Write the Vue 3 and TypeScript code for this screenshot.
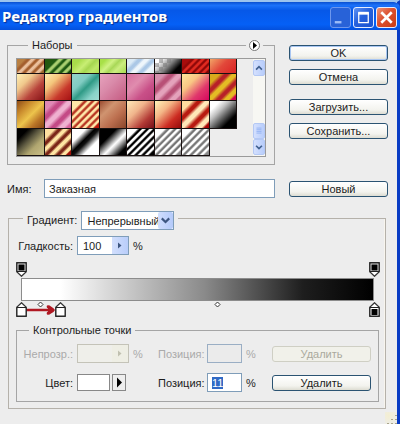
<script setup lang="ts">
import { nextTick, onMounted, ref } from 'vue'

/** Diagonal stripes between two plain corners. */
function stripes(a: string, b: string, step: number, start = a, end = b): string {
  const parts: string[] = [`${start} 0%`, `${start} 18%`]
  for (let p = 20; p + step <= 86; p += step) {
    parts.push(`${b} ${p + step * 0.25}%`, `${b} ${p + step * 0.45}%`)
    parts.push(`${a} ${p + step * 0.7}%`, `${a} ${p + step * 0.95}%`)
  }
  parts.push(`${end} 88%`, `${end} 100%`)
  return `linear-gradient(135deg, ${parts.join(', ')})`
}

function blend(...stops: string[]): string {
  return `linear-gradient(135deg, ${stops.join(', ')})`
}

interface Preset {
  name: string
  paint: string
}

const presets: Preset[] = [
  stripes('#eabf9c', '#a45f2e', 21, '#b98043', '#99662b'),
  stripes('#a9cf70', '#1f5a12', 21, '#22580f', '#174a0c'),
  blend('#a8dc4a 20%', '#c8ee74 42%', '#a6d650 58%', '#bfe86a 75%', '#a8dc4a'),
  blend('#a8e048 15%', '#d0f284 35%', '#a9d858 50%', '#ccee80 65%', '#9fd848'),
  stripes('#eef6fb', '#abc8e6', 32, '#dcebf6', '#e6f2f4'),
  'linear-gradient(135deg, transparent 15%, #777 50%, #000 75%), repeating-conic-gradient(#bbb 0% 25%, #fff 0% 50%) 0 0 / 8px 8px',
  stripes('#e02a20', '#8e0808', 16, '#a80c0c', '#7c0505'),
  blend('#f3a567', '#e2483a 45%', '#d81f22'),
  blend('#fff0b4', '#f0c88c 30%', '#b8443c 62%', '#800d12'),
  blend('#ffeeb0', '#f4c67c 30%', '#c8392c 65%', '#a00c10'),
  blend('#8fd2c8 10%', '#80ccc2 32%', '#2f9a86 50%', '#88d2c8 75%', '#a4ddd4'),
  blend('#e7a2bd', '#d98aa9 40%', '#c3567e'),
  blend('#d76f9f', '#e08cae 35%', '#c95088 65%', '#b83d78'),
  stripes('#e4a2bb', '#b85076', 33, '#d690ac', '#c2688c'),
  blend('#ffe89c', '#f9c684 32%', '#e0386c 65%', '#d4005c'),
  stripes('#e4bb24', '#b82028', 32, '#d9aa1c', '#d10050'),
  blend('#8e4c18', '#c8892c 25%', '#edc44c 50%', '#bb7627 72%', '#7d3d12'),
  stripes('#efb1d0', '#c44a86', 32, '#e089b5', '#d6659c'),
  stripes('#ffe6a8', '#b93824', 13, '#ffe6a8', '#b8180c'),
  blend('#9b4c30', '#d09470 30%', '#bd7050 58%', '#854126'),
  blend('#ffe8b8', '#f0b58c 35%', '#b33b36 68%', '#6c0914'),
  blend('#fff5ba', '#f4b586 33%', '#cc2c22 67%', '#8c0608'),
  stripes('#ffe8b8', '#b81a10', 32, '#ffdca0', '#a80606'),
  blend('#fff 18%', '#c0c0c0 35%', '#000 72%'),
  blend('#000 20%', '#5c5840 42%', '#b0a670 65%', '#cec28a'),
  stripes('#ffe5a4', '#7c2618', 22, '#ffe0a0', '#9f1008'),
  blend('#fff 25%', '#000 42%', '#111 50%', '#fff 68%'),
  blend('#000 30%', '#fff 55%', '#ddd 60%', '#000 82%'),
  stripes('#fff', '#000', 13, '#fff', '#000'),
  stripes('#fff', '#777', 13, '#fff', '#8b8b8b'),
  stripes('#fff', '#777', 13, '#fff', '#8b8b8b'),
].map((paint, i) => ({ name: `${i + 1}`, paint }))

const name = ref('Заказная')
const kind = ref('Непрерывный')
const smoothness = ref('100')
const opacity = ref('')
const opacityPosition = ref('')
const position = ref('11')
const positionInput = ref<HTMLInputElement | null>(null)

const opacityStops = [0, 100]
const colorStops = [
  { at: 0, color: '#fff' },
  { at: 11, color: '#fff' },
  { at: 100, color: '#000' },
]
const midpoints = [5.5, 55.5]

onMounted(async () => {
  await nextTick()
  positionInput.value?.focus()
  positionInput.value?.select()
})
</script>

<template>
  <div class="window">
    <header class="titlebar">
      <h1>Редактор градиентов</h1>
      <div class="controls">
        <button type="button" class="ctl dim" aria-label="Свернуть">
          <svg viewBox="0 0 20 20"><path d="M4 15h7" stroke="#9dbdf8" stroke-width="2.5" /></svg>
        </button>
        <button type="button" class="ctl" aria-label="Развернуть">
          <svg viewBox="0 0 20 20"><path d="M5 5.500h10v10H5z" fill="none" stroke="#fff" stroke-width="1.300" /><path d="M4.400 5.500h11.200" stroke="#fff" stroke-width="3" /></svg>
        </button>
        <button type="button" class="ctl close" aria-label="Закрыть">
          <svg viewBox="0 0 20 20"><path d="M4.500 4.500l11 11M15.500 4.500l-11 11" stroke="#fff" stroke-width="2.800" /></svg>
        </button>
      </div>
    </header>

    <form class="content" @submit.prevent>
      <div class="top">
        <fieldset class="presets">
          <legend>Наборы</legend>
          <button type="button" class="flyout" aria-label="Меню наборов">
            <svg viewBox="0 0 9 9"><path d="M3 1l4 3.500L3 8z" fill="#000" /></svg>
          </button>
          <div class="list">
            <div class="tiles">
              <button
                v-for="p in presets"
                :key="p.name"
                type="button"
                class="tile"
                :aria-label="p.name"
                :style="{ background: p.paint }"
              ></button>
            </div>
            <div class="scroll">
              <button type="button" class="sb" aria-label="Вверх">
                <svg viewBox="0 0 12 16"><path d="M2.500 10L6 6.500 9.500 10" /></svg>
              </button>
              <span class="trough"></span>
              <span class="sb thumb">
                <svg viewBox="0 0 12 16"><path class="ridge" d="M3 4.500h6M3 6.500h6M3 8.500h6M3 10.500h6" /></svg>
              </span>
              <button type="button" class="sb" aria-label="Вниз">
                <svg viewBox="0 0 12 16"><path d="M2.500 6.500L6 10l3.500-3.500" /></svg>
              </button>
            </div>
          </div>
        </fieldset>
        <div class="actions">
          <button type="submit" class="btn default">OK</button>
          <button type="button" class="btn">Отмена</button>
          <button type="button" class="btn second">Загрузить...</button>
          <button type="button" class="btn">Сохранить...</button>
        </div>
      </div>

      <div class="namerow">
        <label for="name">Имя:</label>
        <input id="name" v-model="name" class="field grow" type="text" />
        <button type="button" class="btn">Новый</button>
      </div>

      <fieldset class="gradient">
        <legend class="kind">
          <label for="kind">Градиент:</label>
          <span class="combo">
            <select id="kind" v-model="kind">
              <option>Непрерывный</option>
              <option>Шумовой</option>
            </select>
            <span class="drop">
              <svg viewBox="0 0 14 16"><path d="M3.500 6L7 9.500 10.500 6" /></svg>
            </span>
          </span>
        </legend>

        <div class="row smooth">
          <label class="lead" for="smooth">Гладкость:</label>
          <span class="spin">
            <input id="smooth" v-model="smoothness" type="text" />
            <button type="button" aria-label="Ползунок гладкости">
              <svg viewBox="0 0 16 16"><path d="M6 5l3.500 3L6 11z" /></svg>
            </button>
          </span>
          <span>%</span>
        </div>

        <div class="ramp">
          <button
            v-for="at in opacityStops"
            :key="at"
            type="button"
            class="stop above"
            aria-label="Непрозрачность"
            :style="{ left: at + '%' }"
          >
            <svg viewBox="0 0 11 15"><path d="M.7.700h9.600v9L5.500 14.300.7 9.700z" fill="#fff" stroke="#333" stroke-width="1.200" /><path d="M1 1h9v8.500H1z" fill="#ddd" stroke="#222" /><path d="M2.500 2.500h6v6h-6z" fill="#000" /></svg>
          </button>
          <div class="bar"></div>
          <svg class="hint" viewBox="0 0 30 10"><path d="M0 5h24" stroke="#b01822" stroke-width="2.500" /><path d="M21 .5q2-1 4 1 3 1.500 4 3.500-1 2-4 3.500-2 2-4 1-1-2 1-3V3.500q-2-1-1-3z" fill="#b01822" /></svg>
          <button
            v-for="s in colorStops"
            :key="s.at"
            type="button"
            class="stop below"
            aria-label="Цвет"
            :style="{ left: s.at + '%' }"
          >
            <svg viewBox="0 0 11 15"><path d="M.7 14.300h9.600v-9L5.500.7.7 5.300z" fill="#fff" stroke="#333" stroke-width="1.200" /><path d="M1 5.500h9V14H1z" fill="#fff" stroke="#222" /><path d="M2.500 7h6v6h-6z" :fill="s.color" /></svg>
          </button>
          <span v-for="m in midpoints" :key="m" class="mid" :style="{ left: m + '%' }">
            <svg viewBox="0 0 7 7"><path d="M3.500 1L6 3.500 3.500 6 1 3.500z" fill="#fff" stroke="#333" /></svg>
          </span>
        </div>

        <fieldset class="points">
          <legend>Контрольные точки</legend>
          <div class="row off">
            <label class="lead" for="opacity">Непрозр.:</label>
            <span class="spin">
              <input id="opacity" v-model="opacity" type="text" disabled />
              <button type="button" disabled aria-label="Ползунок непрозрачности">
                <svg viewBox="0 0 16 16"><path d="M6 5l3.500 3L6 11z" /></svg>
              </button>
            </span>
            <span class="pct">%</span>
            <label class="pos" for="opos">Позиция:</label>
            <input id="opos" v-model="opacityPosition" class="field num" type="text" disabled />
            <span>%</span>
            <button type="button" class="btn push" disabled>Удалить</button>
          </div>
          <div class="row">
            <label class="lead" for="color">Цвет:</label>
            <span class="colour">
              <button id="color" type="button" class="well" aria-label="Цвет"></button>
              <button type="button" class="pop" aria-label="Выбор цвета">
                <svg viewBox="0 0 12 15"><path d="M4 2.500l5 5-5 5z" fill="#000" /></svg>
              </button>
            </span>
            <span class="pct"></span>
            <label class="pos" for="pos">Позиция:</label>
            <input id="pos" ref="positionInput" v-model="position" class="field num" type="text" />
            <span>%</span>
            <button type="button" class="btn push">Удалить</button>
          </div>
        </fieldset>
      </fieldset>
    </form>
    <svg class="grip" viewBox="0 0 12 12"><path d="M11 3v1M7 7v1M11 7v1M3 11v1M7 11v1M11 11v1" stroke="#a9a58c" stroke-width="2" /></svg>
  </div>
</template>

<style>
body {
  background: #ededed;
}
</style>

<style scoped>
* {
  box-sizing: border-box;
}
.window {
  position: relative;
  min-height: 100vh;
  background: #ededed;
  border-top: 2px solid #9cc3ee;
  border-right: 3px solid #0a3cc4;
  font: 11px/14px "Liberation Sans", Arial, sans-serif;
  color: #1c1c1c;
}
button,
input,
select {
  font: inherit;
  color: inherit;
  margin: 0;
  padding: 0;
  outline: none;
}
svg {
  display: block;
  width: 100%;
  height: 100%;
}
fieldset {
  margin: 0;
  padding: 0;
  min-width: 0;
  border: 1px solid #a5a5a5;
}
legend {
  padding: 0 4px;
}
.titlebar {
  display: flex;
  align-items: center;
  justify-content: space-between;
  height: 28px;
  margin-right: -3px;
  padding: 0 3px 0 2px;
  border-top-right-radius: 6px;
  background: linear-gradient(#0a4fd0, #1c72fa 12%, #0658e8 30%, #0560f6 80%, #0450dc);
}
h1 {
  margin: 0;
  font: bold 15px/24px "Noto Sans", "Open Sans", sans-serif;
  color: #fff;
  text-shadow: 1px 1px 1px #0a2f90;
  white-space: nowrap;
}
.controls {
  display: flex;
  gap: 2px;
  padding-top: 2px;
}
.ctl {
  width: 21px;
  height: 21px;
  border: 1px solid #e4ecff;
  border-radius: 3px;
  background: linear-gradient(135deg, #5f93f4, #2560dc 45%, #1a52cf);
}
.ctl.dim {
  border-color: #6d97ee;
  background: #2862d8;
}
.ctl.close {
  background: linear-gradient(135deg, #ec9274, #dc5030 45%, #c83c14);
}
.content {
  padding: 8px 9px 0 7px;
}
.top {
  display: flex;
  gap: 14px;
}
.presets {
  position: relative;
  flex: 1;
  padding: 6px 8px 7px;
}
.presets legend {
  margin-left: 12px;
}
.flyout {
  position: absolute;
  top: -12px;
  right: 14px;
  width: 11px;
  height: 11px;
  border: 1px solid #777;
  border-radius: 50%;
  background: #fff;
  box-shadow: 0 0 0 3px #ededed;
}
.list {
  display: flex;
  justify-content: space-between;
  height: 99px;
  border: 1px solid #9a9a9a;
}
.tiles {
  flex: 0 1 220px;
  display: grid;
  grid-template-columns: repeat(8, 1fr);
  grid-template-rows: 15px 27px 28px 27px;
}
.tile {
  border: 0;
  border-radius: 0;
  box-shadow: inset -1px -1px #181010;
}
.scroll {
  display: flex;
  flex-direction: column;
  width: 12px;
  padding: 1px 0;
  background: #f7f7f3;
}
.trough {
  flex: 1;
}
.sb {
  height: 16px;
  border: 1px solid #b4c8f4;
  border-radius: 2px;
  background: linear-gradient(90deg, #d4e0fe, #b8cdfb);
}
.sb path {
  fill: none;
  stroke: #41608f;
  stroke-width: 2;
}
.sb .ridge {
  stroke: #8fb0f0;
  stroke-width: 1;
}
.actions {
  display: flex;
  flex-direction: column;
  width: 99px;
  gap: 8px;
  padding-top: 7px;
}
.btn {
  width: 99px;
  height: 16px;
  border: 1px solid #2b5372;
  border-radius: 3px;
  background: linear-gradient(#fff, #f3f3ee 70%, #dddcd2);
  line-height: 14px;
  text-align: center;
}
.btn.default {
  box-shadow: inset 0 0 0 1px #a9c6f2;
}
.btn.second {
  margin-top: 6px;
}
.btn:disabled {
  border-color: #cfcfc4;
  background: #f1f1ea;
  color: #aaa99d;
}
.namerow {
  display: flex;
  align-items: center;
  margin-top: 14px;
}
.namerow label {
  width: 37px;
}
.namerow .btn {
  margin-left: 14px;
}
.field {
  height: 19px;
  min-width: 0;
  border: 1px solid #7f9db9;
  background: #fff;
  padding: 0 4px;
}
.grow {
  flex: 1;
}
.gradient {
  margin: 13px 2px 0 1px;
  padding: 0 6px 6px 7px;
  border-color: #b5b1aa;
  box-shadow: inset -1px 0 #f8f5ee;
}
.kind {
  display: flex;
  align-items: flex-start;
  height: 14px;
  margin-left: 7px;
  gap: 4px;
}
.kind label {
  line-height: 18px;
}
.combo {
  position: relative;
  width: 93px;
  height: 19px;
}
.combo select {
  width: 100%;
  height: 100%;
  padding-left: 5px;
  border: 1px solid #7f9db9;
  border-radius: 0;
  background: #fff;
  appearance: none;
}
.drop {
  position: absolute;
  top: 1px;
  right: 1px;
  width: 15px;
  height: 17px;
  border-radius: 2px;
  background: linear-gradient(90deg, #d0defd, #b4cafa);
  pointer-events: none;
}
.drop path {
  fill: none;
  stroke: #3d5680;
  stroke-width: 2;
}
.row {
  display: flex;
  align-items: center;
  height: 19px;
}
.smooth {
  margin-top: 11px;
}
.smooth .lead {
  width: 57px;
  margin-right: 4px;
}
.lead {
  width: 52px;
  margin-right: 4px;
  text-align: right;
  white-space: nowrap;
}
.spin {
  display: flex;
  width: 52px;
  height: 19px;
  margin-right: 4px;
  border: 1px solid #7f9db9;
  background: #fff;
}
.spin input {
  flex: 1;
  min-width: 0;
  padding-left: 5px;
  border: 0;
  background: none;
}
.spin button {
  width: 16px;
  border: 0;
  background: linear-gradient(90deg, #d2dffd, #b9cdfa);
}
.spin path {
  fill: #3d5680;
}
.ramp {
  position: relative;
  margin: 7px 5px 0 5px;
  padding: 16px 0;
}
.bar {
  height: 23px;
  border: 1px solid #8c8c8c;
  background: linear-gradient(90deg, #fff 11%, #8a8a8a 52%, #1e1e1e 80%, #000);
}
.stop {
  position: absolute;
  width: 11px;
  height: 15px;
  margin-left: -5px;
  border: 0;
  background: none;
}
.above {
  top: 0;
}
.below {
  bottom: 0;
}
.hint {
  position: absolute;
  left: 5px;
  bottom: 2px;
  width: 30px;
  height: 10px;
}
.mid {
  position: absolute;
  bottom: 9px;
  width: 7px;
  height: 7px;
  margin-left: -3px;
}
.points {
  margin-top: 6px;
  padding: 7px 7px 9px 4px;
}
.points legend {
  margin-left: 8px;
}
.points .row + .row {
  margin-top: 10px;
}
.pct {
  width: 25px;
}
.pos {
  width: 46px;
  margin-right: 3px;
  white-space: nowrap;
}
.num {
  width: 35px;
  margin-right: 4px;
}
.num::selection {
  background: #316ac5;
  color: #fff;
}
.push {
  margin-left: auto;
}
.off {
  color: #aaa;
}
.off .spin {
  border-color: #c4c3b8;
  background: #efefea;
}
.off .spin button {
  background: #eeeee4;
}
.off .spin path {
  fill: #c0c0b0;
}
.off .field {
  border-color: #9aaec4;
  background: #ebebeb;
}
.colour {
  display: flex;
  align-items: center;
  gap: 2px;
  width: 52px;
  margin-right: 4px;
}
.well {
  width: 33px;
  height: 17px;
  border: 1px solid #888;
  background: #fff;
}
.pop {
  width: 14px;
  height: 17px;
  border: 1px solid #888;
  background: #eee;
}
.grip {
  position: absolute;
  right: 0;
  bottom: 0;
  width: 12px;
  height: 12px;
  background: radial-gradient(circle at 30% 30%, #f3eed2, #ededed);
}
</style>
